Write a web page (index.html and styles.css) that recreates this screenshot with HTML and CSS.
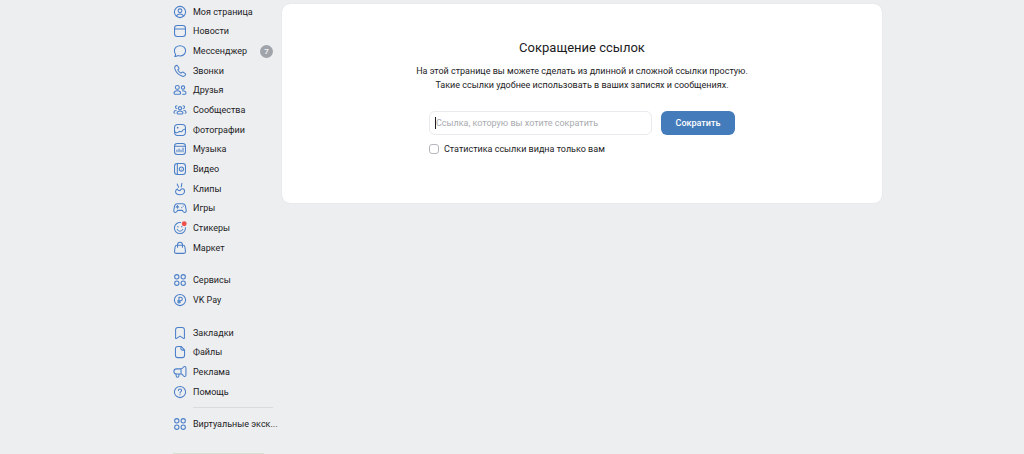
FILE: index.html
```html
<!DOCTYPE html>
<html lang="ru">
<head>
    <meta charset="UTF-8">
    <meta name="viewport" content="width=device-width, initial-scale=1.0">
    <title>Сокращение ссылок</title>
    <link rel="stylesheet" href="styles.css">
</head>
<body>
    <div class="layout">
        <nav class="sidebar">
            <ul class="menu">
                <li><a href="#"><svg viewBox="0 0 20 20"><circle cx="10" cy="10" r="8"/><circle cx="10" cy="8.2" r="2.7"/><path d="M4.8 15.6c1.2-2 3-2.7 5.2-2.7s4 .7 5.2 2.7"/></svg><span>Моя страница</span></a></li>
                <li><a href="#"><svg viewBox="0 0 20 20"><rect x="2.2" y="2.2" width="15.6" height="15.6" rx="4"/><path d="M2.5 7h15"/></svg><span>Новости</span></a></li>
                <li><a href="#"><svg viewBox="0 0 20 20"><path d="M10 2.5c4.5 0 8 3.200 8 7.300s-3.500 7.300-8 7.300c-1.100 0-2.200-.2-3.200-.6-1 .8-2.400 1.300-4.300 1.300 1-1.100 1.300-2.200 1.200-3.200C2.600 13.300 2 11.600 2 9.800c0-4.100 3.500-7.300 8-7.300z"/></svg><span>Мессенджер</span><b class="counter">7</b></a></li>
                <li><a href="#"><svg viewBox="0 0 20 20"><path d="M3.200 3.200l1.300-1c.6-.4 1.400-.3 1.800.3l2 2.900c.4.6.3 1.300-.2 1.800L6.900 8.400c.9 2.100 2.600 3.800 4.700 4.700l1.200-1.200c.5-.5 1.200-.6 1.800-.2l2.900 2c.6.4.7 1.200.3 1.800l-1 1.300c-.8 1-2.300 1.100-4.200.4-4.700-1.700-8.100-5.100-9.800-9.800-.7-1.900-.6-3.400.4-4.200z"/></svg><span>Звонки</span></a></li>
                <li><a href="#"><svg viewBox="0 0 20 20"><circle cx="6.200" cy="6.500" r="2.800"/><circle cx="14.300" cy="6.500" r="2.400"/><path d="M1.500 14.500c0-2.200 1.900-3.300 4.700-3.300s4.700 1.100 4.700 3.300c0 1.100-.7 1.700-1.800 1.700H3.300c-1.100 0-1.800-.6-1.800-1.700zM13.500 11.200c3 0 5 1.200 5 3.300 0 1.100-.7 1.700-1.800 1.700h-3"/></svg><span>Друзья</span></a></li>
                <li><a href="#"><svg viewBox="0 0 20 20"><circle cx="10" cy="7.500" r="2.300"/><path d="M5.800 14.300c0-1.900 1.700-2.900 4.200-2.900s4.200 1 4.200 2.900c0 1-.6 1.500-1.600 1.500H7.400c-1 0-1.600-.5-1.600-1.500zM5.500 3.800a2 2 0 1 0 0 4M14.500 3.800a2 2 0 1 1 0 4M4.500 10.800c-2 .1-3.200 1-3.200 2.400 0 .8.500 1.300 1.300 1.300M15.500 10.800c2 .1 3.200 1 3.200 2.400 0 .8-.5 1.300-1.300 1.300"/></svg><span>Сообщества</span></a></li>
                <li><a href="#"><svg viewBox="0 0 20 20"><rect x="2.200" y="2.200" width="15.600" height="15.600" rx="4.500"/><circle class="fill" cx="6.700" cy="6.700" r="1.200"/><path d="M2.500 12.300c1.800 2 3.700 2 5.200.6 1.200-1.200 2.300-1.100 3.300-.6 1.300.6 2-.3 2.700-1.600.8-1.400 2-2 3.800-1.700"/></svg><span>Фотографии</span></a></li>
                <li><a href="#"><svg viewBox="0 0 20 20"><rect x="2.200" y="2.200" width="15.600" height="15.600" rx="4"/><path d="M3 6.200h14M5.700 11.500v2.500M8.600 10v4M11.400 11.500V14M14.300 8.500V14"/></svg><span>Музыка</span></a></li>
                <li><a href="#"><svg viewBox="0 0 20 20"><rect x="2.200" y="2.200" width="15.600" height="15.600" rx="4"/><path d="M6.200 2.500v15"/><circle cx="12" cy="10" r="3"/><circle class="fill" cx="12" cy="10" r=".7"/></svg><span>Видео</span></a></li>
                <li><a href="#"><svg viewBox="0 0 20 20"><path d="M8 7.500L6 3M11.800 7l.9-5.200M6.200 9.800c-1.700 1-2.500 2.200-2.500 3.700 0 2.800 2.700 4.700 6.200 4.700s6.600-2.100 6.600-5.100c0-2.100-1.200-3.400-3-3.400-1.300 0-2 .7-2.600 1.600-.8 1.100-1.800 1.300-2.900.6-1.300-.7-2.400-1.100-1.800-2.100z"/></svg><span>Клипы</span></a></li>
                <li><a href="#"><svg viewBox="0 0 20 20"><path d="M6 3.800h8c2.300 0 3.300 1.200 3.800 3.600l1 5.600c.4 2-.5 3.300-2 3.300-1.200 0-1.900-.6-2.600-1.700l-.8-1.200H6.600l-.8 1.200c-.7 1.100-1.400 1.700-2.600 1.700-1.500 0-2.400-1.300-2-3.300l1-5.600C2.700 5 3.700 3.800 6 3.800zM6.300 6.600v3.600M4.500 8.400h3.600"/><circle class="fill" cx="12.500" cy="9.400" r=".9"/><circle class="fill" cx="14.500" cy="7.300" r=".9"/></svg><span>Игры</span></a></li>
                <li><a href="#"><svg viewBox="0 0 20 20"><path d="M17.800 9.500A7.900 7.900 0 1 1 11 2.200M6 12c.8 1.700 2.200 2.600 4 2.600s3.200-.9 4-2.600"/><circle class="fill" cx="7" cy="8.300" r="1"/><circle class="fill" cx="12.500" cy="8.300" r="1"/><circle class="dot" cx="16" cy="4" r="3.500"/></svg><span>Стикеры</span></a></li>
                <li><a href="#"><svg viewBox="0 0 20 20"><path d="M5.500 6.200h9c1.500 0 2.300.8 2.500 2.300l.8 6c.2 2-.8 3.200-2.800 3.200H5c-2 0-3-1.200-2.800-3.200l.8-6c.2-1.500 1-2.300 2.500-2.300zM6.500 9V5.500c0-2.200 1.400-3.700 3.500-3.700s3.500 1.500 3.500 3.700V9"/></svg><span>Маркет</span></a></li>
                <li class="group-start"><a href="#"><svg viewBox="0 0 20 20"><circle cx="5.400" cy="5.400" r="3.100"/><circle cx="14.600" cy="5.400" r="3.100"/><circle cx="5.400" cy="14.600" r="3.100"/><circle cx="14.600" cy="14.600" r="3.100"/></svg><span>Сервисы</span></a></li>
                <li><a href="#"><svg viewBox="0 0 20 20"><circle cx="10" cy="10" r="8"/><path d="M8.500 14.500V6h2.300a2.500 2.500 0 0 1 0 5H6.700M6.700 13h4"/></svg><span>VK Pay</span></a></li>
                <li class="group-start"><a href="#"><svg viewBox="0 0 20 20"><path d="M3.700 17V5.500c0-2.200 1.100-3.500 3.300-3.500h6c2.200 0 3.300 1.300 3.300 3.500V17c0 .8-.8 1.200-1.500.7L10 14.500l-4.800 3.200c-.7.500-1.500.1-1.500-.7z"/></svg><span>Закладки</span></a></li>
                <li><a href="#"><svg viewBox="0 0 20 20"><path d="M7 2h4.500l5 5v7.500c0 2.300-1.200 3.500-3.500 3.500H7c-2.300 0-3.500-1.200-3.500-3.500v-9C3.500 3.200 4.700 2 7 2zM11.300 2.300v3.200c0 1.200.6 1.800 1.800 1.800h3.100"/></svg><span>Файлы</span></a></li>
                <li><a href="#"><svg viewBox="0 0 20 20"><path d="M11.500 5.500H5.200c-2.300 0-3.900 1.500-3.900 3.700s1.600 3.700 3.900 3.700h6.300zM11.500 5.500c1.300-.2 2.400-.9 3.300-2.200 1.200-1.800 3.700-1.300 3.700 1v10c0 2.300-2.500 2.800-3.700 1-.9-1.400-2-2.200-3.300-2.400M4.500 13v2.300c0 1.300.8 2.200 2 2.200s2-.9 2-2.200V13"/></svg><span>Реклама</span></a></li>
                <li><a href="#"><svg viewBox="0 0 20 20"><circle cx="10" cy="10" r="8"/><path d="M7.700 8c0-1.400 1-2.300 2.300-2.300s2.300.9 2.300 2.100c0 1.700-2.300 1.800-2.300 3.800"/><circle class="fill" cx="10" cy="14" r=".9"/></svg><span>Помощь</span></a></li>
                <li class="divider"></li>
                <li><a href="#"><svg viewBox="0 0 20 20"><circle cx="5.400" cy="5.400" r="3.100"/><circle cx="14.600" cy="5.400" r="3.100"/><circle cx="5.400" cy="14.600" r="3.100"/><circle cx="14.600" cy="14.600" r="3.100"/></svg><span>Виртуальные экск...</span></a></li>
            </ul>
            <div class="promo"></div>
        </nav>

        <main class="card">
            <h1>Сокращение ссылок</h1>
            <p>На этой странице вы можете сделать из длинной и сложной ссылки простую.<br>Такие ссылки удобнее использовать в ваших записях и сообщениях.</p>
            <form class="shortener">
                <div class="row">
                    <div class="field">
                        <input type="text" id="link" aria-label="Ссылка" placeholder="Ссылка, которую вы хотите сократить">
                        <span class="caret"></span>
                    </div>
                    <button type="button">Сократить</button>
                </div>
                <label class="check"><input type="checkbox"><span>Статистика ссылки видна только вам</span></label>
            </form>
        </main>
    </div>
</body>
</html>
```
FILE: styles.css
```css
* {
    box-sizing: border-box;
}

body {
    margin: 0;
    background: #edeef0;
    color: #1c1c1e;
    font-family: Roboto, 'Open Sans', sans-serif;
    font-size: 9px;
    line-height: 14px;
}

.layout {
    display: flex;
    align-items: flex-start;
    gap: 9px;
    max-width: 740px;
    margin: 0 auto;
    padding-left: 31px;
}

.sidebar {
    display: flex;
    flex-direction: column;
    flex: 0 0 100px;
    min-width: 0;
    height: 100vh;
    padding-top: 2px;
}

/* rows share the height of the window */
.menu {
    display: flex;
    flex-direction: column;
    flex: 1;
    margin: 0 0 19px;
    padding: 0;
    list-style: none;
}

.menu li {
    display: flex;
    flex: 1 0 auto;
}

.menu .group-start {
    margin-top: 13px;
}

.menu .divider {
    flex: 0 0 13px;
    align-items: center;
    padding-left: 20px;
}

.divider::before {
    content: '';
    flex: 1;
    border-top: 1px solid #d9dbdf;
}

.menu a {
    display: flex;
    align-items: center;
    flex: 1;
    gap: 6px;
    min-width: 0;
    color: inherit;
    text-decoration: none;
    white-space: nowrap;
}

.menu svg {
    flex: none;
    width: 14px;
    height: 14px;
    fill: none;
    stroke: #4a7fc9;
    stroke-width: 1.5;
    stroke-linecap: round;
    stroke-linejoin: round;
}

.menu svg .fill {
    fill: #4a7fc9;
    stroke: none;
}

.menu svg .dot {
    fill: #f0504c;
    stroke: none;
}

.counter {
    min-width: 13px;
    height: 13px;
    margin-left: auto;
    border-radius: 7px;
    background: #a0a4aa;
    color: #f4f5f6;
    font-size: 8px;
    font-weight: 500;
    line-height: 13px;
    text-align: center;
}

.promo {
    width: 91px;
    height: 1px;
    background: #d5e0d3;
}

.card {
    flex: 1;
    margin-top: 4px;
    padding: 35px 20px 47px;
    border-radius: 8px;
    background: #ffffff;
    box-shadow: 0 0 1px #c8ccd2;
    text-align: center;
}

h1 {
    margin: 0 0 7px;
    font-size: 13px;
    font-weight: 400;
    line-height: 18px;
}

p {
    margin: 0 0 19px;
}

.shortener {
    width: 306px;
    margin: 0 auto;
}

.row {
    display: flex;
    gap: 9px;
}

.field {
    position: relative;
    flex: 1;
}

.field input {
    display: block;
    width: 100%;
    height: 24px;
    padding: 0 6px;
    border: 1px solid #e9eaed;
    border-radius: 6px;
    outline: none;
    background: #ffffff;
    color: inherit;
    font: inherit;
}

.field input::placeholder {
    color: #a9abb0;
}

.caret {
    position: absolute;
    top: 6px;
    left: 6px;
    width: 1px;
    height: 12px;
    background: #1c1c1e;
}

button {
    width: 74px;
    height: 24px;
    padding: 0;
    border: none;
    border-radius: 6px;
    background: #447bba;
    color: #ffffff;
    font: inherit;
    font-weight: 500;
    cursor: pointer;
}

.check {
    display: flex;
    align-items: center;
    gap: 5px;
    margin-top: 7px;
}

.check input {
    appearance: none;
    width: 10px;
    height: 10px;
    margin: 0;
    border: 1px solid #b4b8be;
    border-radius: 3px;
    background: #ffffff;
}
```
